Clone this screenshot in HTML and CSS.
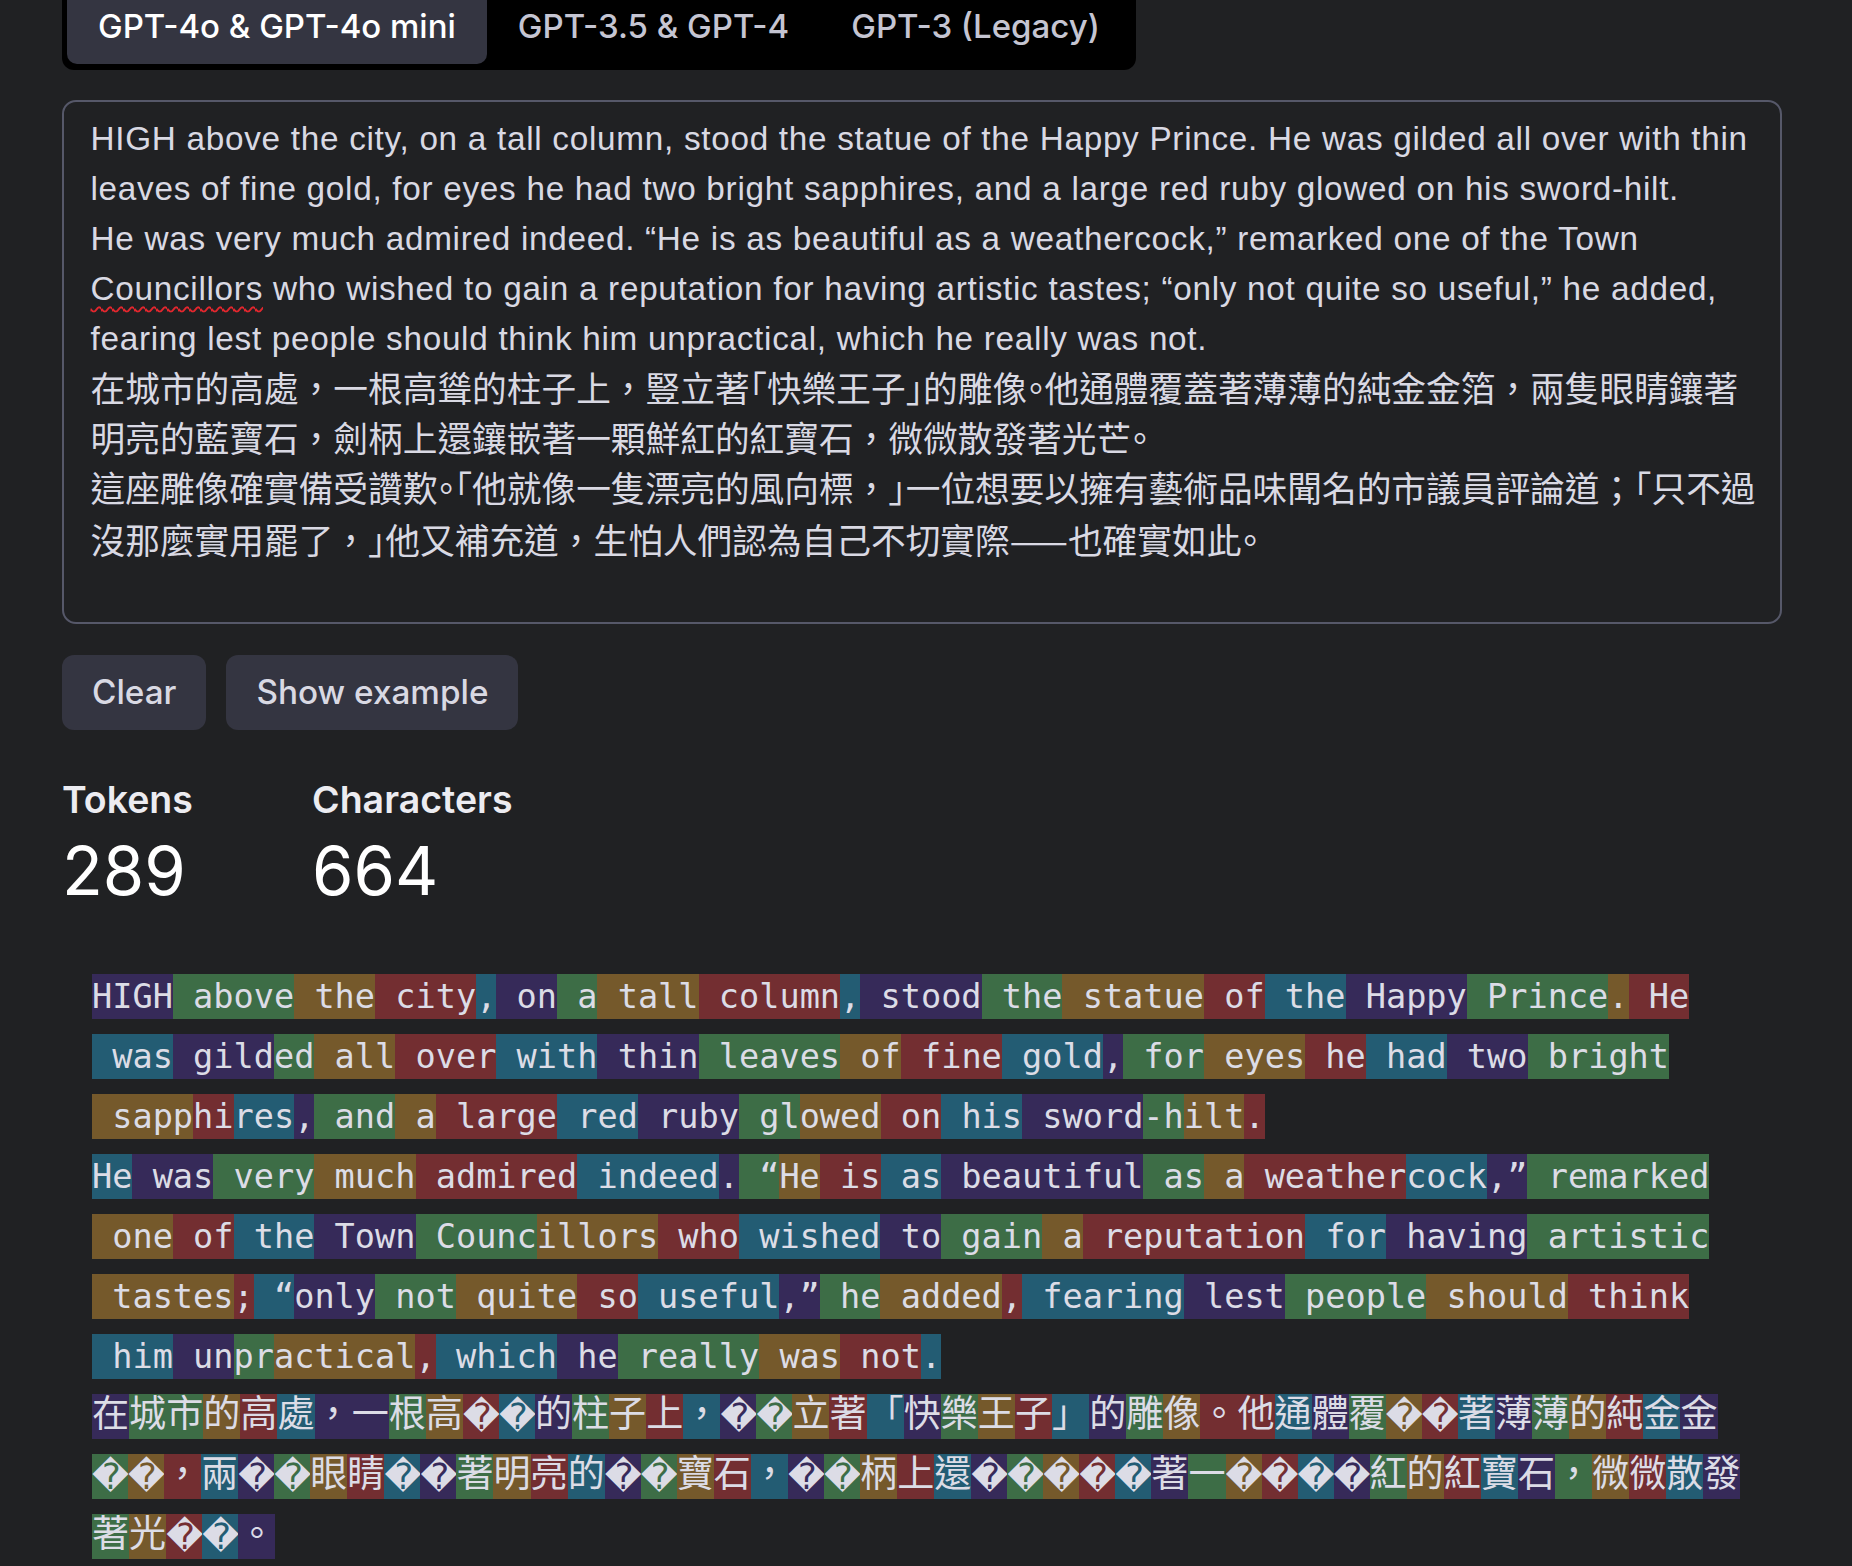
FILE: index.html
```html
<!DOCTYPE html>
<html lang="en">
<head>
<meta charset="utf-8">
<title>Tokenizer</title>
<link rel="stylesheet" href="styles.css">
</head>
<body>
<main class="page">
  <nav class="tabs">
    <div class="tab active">GPT-4o &amp; GPT-4o mini</div>
    <div class="tab">GPT-3.5 &amp; GPT-4</div>
    <div class="tab">GPT-3 (Legacy)</div>
  </nav>

  <div class="input">
    <div class="ln">HIGH above the city, on a tall column, stood the statue of the Happy Prince. He was gilded all over with thin</div>
    <div class="ln">leaves of fine gold, for eyes he had two bright sapphires, and a large red ruby glowed on his sword-hilt.</div>
    <div class="ln">He was very much admired indeed. “He is as beautiful as a weathercock,” remarked one of the Town</div>
    <div class="ln"><span class="typo">Councillors</span> who wished to gain a reputation for having artistic tastes; “only not quite so useful,” he added,</div>
    <div class="ln">fearing lest people should think him unpractical, which he really was not.</div>
    <div class="ln zh">在城市的高處，一根高聳的柱子上，豎立著<span class="h">「</span>快樂王子<span class="h">」</span>的雕像<span class="h">。</span>他通體覆蓋著薄薄的純金金箔，兩隻眼睛鑲著</div>
    <div class="ln zh">明亮的藍寶石，劍柄上還鑲嵌著一顆鮮紅的紅寶石，微微散發著光芒<span class="h">。</span></div>
    <div class="ln zh">這座雕像確實備受讚歎<span class="h">。「</span>他就像一隻漂亮的風向標，<span class="h">」</span>一位想要以擁有藝術品味聞名的市議員評論道；<span class="h">「</span>只不過</div>
    <div class="ln zh">沒那麼實用罷了，<span class="h">」</span>他又補充道，生怕人們認為自己不切實際<span class="dash">——</span>也確實如此<span class="h">。</span></div>
  </div>

  <div class="actions">
    <button class="btn">Clear</button>
    <button class="btn">Show example</button>
  </div>

  <div class="stats">
    <div class="stat">
      <div class="stat-label">Tokens</div>
      <div class="stat-value">289</div>
    </div>
    <div class="stat">
      <div class="stat-label">Characters</div>
      <div class="stat-value">664</div>
    </div>
  </div>

  <div class="tokens">
    <div class="para">
      <span class="k p">HIGH</span>
      <span class="k g"> above</span>
      <span class="k b"> the</span>
      <span class="k r"> city</span>
      <span class="k t">,</span>
      <span class="k p"> on</span>
      <span class="k g"> a</span>
      <span class="k b"> tall</span>
      <span class="k r"> column</span>
      <span class="k t">,</span>
      <span class="k p"> stood</span>
      <span class="k g"> the</span>
      <span class="k b"> statue</span>
      <span class="k r"> of</span>
      <span class="k t"> the</span>
      <span class="k p"> Happy</span>
      <span class="k g"> Prince</span>
      <span class="k b">.</span>
      <span class="k r"> He</span>
      <span class="k t"> was</span>
      <span class="k p"> gild</span>
      <span class="k g">ed</span>
      <span class="k b"> all</span>
      <span class="k r"> over</span>
      <span class="k t"> with</span>
      <span class="k p"> thin</span>
      <span class="k g"> leaves</span>
      <span class="k b"> of</span>
      <span class="k r"> fine</span>
      <span class="k t"> gold</span>
      <span class="k p">,</span>
      <span class="k g"> for</span>
      <span class="k b"> eyes</span>
      <span class="k r"> he</span>
      <span class="k t"> had</span>
      <span class="k p"> two</span>
      <span class="k g"> bright</span>
      <span class="k b"> sapp</span>
      <span class="k r">hi</span>
      <span class="k t">res</span>
      <span class="k p">,</span>
      <span class="k g"> and</span>
      <span class="k b"> a</span>
      <span class="k r"> large</span>
      <span class="k t"> red</span>
      <span class="k p"> ruby</span>
      <span class="k g"> gl</span>
      <span class="k b">owed</span>
      <span class="k r"> on</span>
      <span class="k t"> his</span>
      <span class="k p"> sword</span>
      <span class="k g">-h</span>
      <span class="k b">ilt</span>
      <span class="k r">.</span>
    </div>
    <div class="para">
      <span class="k t">He</span>
      <span class="k p"> was</span>
      <span class="k g"> very</span>
      <span class="k b"> much</span>
      <span class="k r"> admired</span>
      <span class="k t"> indeed</span>
      <span class="k p">.</span>
      <span class="k g"> “</span>
      <span class="k b">He</span>
      <span class="k r"> is</span>
      <span class="k t"> as</span>
      <span class="k p"> beautiful</span>
      <span class="k g"> as</span>
      <span class="k b"> a</span>
      <span class="k r"> weather</span>
      <span class="k t">cock</span>
      <span class="k p">,”</span>
      <span class="k g"> remarked</span>
      <span class="k b"> one</span>
      <span class="k r"> of</span>
      <span class="k t"> the</span>
      <span class="k p"> Town</span>
      <span class="k g"> Counc</span>
      <span class="k b">illors</span>
      <span class="k r"> who</span>
      <span class="k t"> wished</span>
      <span class="k p"> to</span>
      <span class="k g"> gain</span>
      <span class="k b"> a</span>
      <span class="k r"> reputation</span>
      <span class="k t"> for</span>
      <span class="k p"> having</span>
      <span class="k g"> artistic</span>
      <span class="k b"> tastes</span>
      <span class="k r">;</span>
      <span class="k t"> “</span>
      <span class="k p">only</span>
      <span class="k g"> not</span>
      <span class="k b"> quite</span>
      <span class="k r"> so</span>
      <span class="k t"> useful</span>
      <span class="k p">,”</span>
      <span class="k g"> he</span>
      <span class="k b"> added</span>
      <span class="k r">,</span>
      <span class="k t"> fearing</span>
      <span class="k p"> lest</span>
      <span class="k g"> people</span>
      <span class="k b"> should</span>
      <span class="k r"> think</span>
      <span class="k t"> him</span>
      <span class="k p"> un</span>
      <span class="k g">pr</span>
      <span class="k b">actical</span>
      <span class="k r">,</span>
      <span class="k t"> which</span>
      <span class="k p"> he</span>
      <span class="k g"> really</span>
      <span class="k b"> was</span>
      <span class="k r"> not</span>
      <span class="k t">.</span>
    </div>
    <div class="para">
      <span class="k p cj">在</span>
      <span class="k g cj">城市</span>
      <span class="k b cj">的</span>
      <span class="k r cj">高</span>
      <span class="k t cj">處</span>
      <span class="k p cj">，一</span>
      <span class="k g cj">根</span>
      <span class="k b cj">高</span>
      <span class="k r rc">�</span>
      <span class="k t rc">�</span>
      <span class="k p cj">的</span>
      <span class="k g cj">柱</span>
      <span class="k b cj">子</span>
      <span class="k r cj">上</span>
      <span class="k t cj">，</span>
      <span class="k p rc">�</span>
      <span class="k g rc">�</span>
      <span class="k b cj">立</span>
      <span class="k r cj">著</span>
      <span class="k t cj">「</span>
      <span class="k p cj">快</span>
      <span class="k g cj">樂</span>
      <span class="k b cj">王</span>
      <span class="k r cj">子</span>
      <span class="k t cj">」</span>
      <span class="k p cj">的</span>
      <span class="k g cj">雕</span>
      <span class="k b cj">像</span>
      <span class="k r cj">。他</span>
      <span class="k t cj">通</span>
      <span class="k p cj">體</span>
      <span class="k g cj">覆</span>
      <span class="k b rc">�</span>
      <span class="k r rc">�</span>
      <span class="k t cj">著</span>
      <span class="k p cj">薄</span>
      <span class="k g cj">薄</span>
      <span class="k b cj">的</span>
      <span class="k r cj">純</span>
      <span class="k t cj">金</span>
      <span class="k p cj">金</span>
      <span class="k g rc">�</span>
      <span class="k b rc">�</span>
      <span class="k r cj">，</span>
      <span class="k t cj">兩</span>
      <span class="k p rc">�</span>
      <span class="k g rc">�</span>
      <span class="k b cj">眼</span>
      <span class="k r cj">睛</span>
      <span class="k t rc">�</span>
      <span class="k p rc">�</span>
      <span class="k g cj">著</span>
      <span class="k b cj">明</span>
      <span class="k r cj">亮</span>
      <span class="k t cj">的</span>
      <span class="k p rc">�</span>
      <span class="k g rc">�</span>
      <span class="k b cj">寶</span>
      <span class="k r cj">石</span>
      <span class="k t cj">，</span>
      <span class="k p rc">�</span>
      <span class="k g rc">�</span>
      <span class="k b cj">柄</span>
      <span class="k r cj">上</span>
      <span class="k t cj">還</span>
      <span class="k p rc">�</span>
      <span class="k g rc">�</span>
      <span class="k b rc">�</span>
      <span class="k r rc">�</span>
      <span class="k t rc">�</span>
      <span class="k p cj">著</span>
      <span class="k g cj">一</span>
      <span class="k b rc">�</span>
      <span class="k r rc">�</span>
      <span class="k t rc">�</span>
      <span class="k p rc">�</span>
      <span class="k g cj">紅</span>
      <span class="k b cj">的</span>
      <span class="k r cj">紅</span>
      <span class="k t cj">寶</span>
      <span class="k p cj">石</span>
      <span class="k g cj">，</span>
      <span class="k b cj">微</span>
      <span class="k r cj">微</span>
      <span class="k t cj">散</span>
      <span class="k p cj">發</span>
      <span class="k g cj">著</span>
      <span class="k b cj">光</span>
      <span class="k r rc">�</span>
      <span class="k t rc">�</span>
      <span class="k p cj">。</span>
    </div>
  </div>
</main>
</body>
</html>
```

FILE: styles.css
```css
* {
  box-sizing: border-box;
}

html,
body {
  margin: 0;
  padding: 0;
  background: #202123;
}

body {
  font-family: "Liberation Sans", "Noto Sans CJK TC", sans-serif;
  color: #d9d9e3;
}

.page {
  margin-left: 62px;
  width: 1720px;
}

/* Tabs */
.tabs {
  display: inline-flex;
  background: #000;
  padding: 0 5px 6px;
  border-radius: 0 0 12px 12px;
}

.tab {
  font-family: Inter, "Liberation Sans", sans-serif;
  font-weight: 500;
  font-size: 33px;
  line-height: 52px;
  padding: 0 31px 12px;
  color: #c5c5d2;
  border-radius: 0 0 10px 10px;
  white-space: nowrap;
}

.tab.active {
  background: #343541;
  color: #fff;
}

/* Input */
.input {
  margin-top: 30px;
  height: 524px;
  border: 2px solid #565869;
  border-radius: 14px;
  padding: 11.5px 20px 0 26.5px;
  font-size: 33.3px;
  line-height: 50px;
  color: #d9d9e3;
  overflow: hidden;
}

.ln {
  white-space: nowrap;
  letter-spacing: 0.71px;
}

.ln.zh {
  font-family: Inter, "Noto Sans CJK TC", sans-serif;
  font-size: 34.7px;
  letter-spacing: 0;
}

.h {
  font-feature-settings: "halt" 1;
}

.dash {
  font-family: "Noto Sans CJK TC", sans-serif;
  letter-spacing: -8.7px;
  padding-right: 8.7px;
}

.typo {
  text-decoration: underline wavy #e3262d;
  text-decoration-thickness: 2px;
  text-underline-offset: 6px;
}

/* Buttons */
.actions {
  display: flex;
  gap: 20px;
  margin-top: 31px;
}

.btn {
  font-family: Inter, "Liberation Sans", sans-serif;
  font-weight: 500;
  font-size: 33.3px;
  line-height: 75px;
  height: 75px;
  padding: 0 30px;
  background: #343541;
  color: #d9d9e3;
  border: 0;
  border-radius: 12px;
}

/* Stats */
.stats {
  display: flex;
  margin-top: 47px;
}

.stat {
  width: 250px;
}

.stat-label {
  font-family: Inter, "Liberation Sans", sans-serif;
  font-weight: 600;
  font-size: 37.5px;
  line-height: 46px;
  color: #ececf1;
}

.stat-value {
  font-family: Inter, "Liberation Sans", sans-serif;
  font-weight: 400;
  font-size: 67px;
  line-height: 82px;
  margin-top: 7px;
  color: #fff;
}

/* Tokens */
.tokens {
  margin-top: 62px;
  margin-left: 30px;
  width: 1655px;
  display: flex;
  flex-direction: column;
  gap: 15px;
}

.para {
  display: flex;
  flex-wrap: wrap;
  row-gap: 15px;
}

.k {
  flex: none;
  height: 45px;
  line-height: 45px;
  white-space: pre;
  font-family: "DejaVu Sans Mono", "Liberation Mono", monospace;
  font-size: 33.6px;
  color: #dcdce6;
  text-spacing-trim: space-all;
}

.k.cj {
  font-family: "Noto Sans CJK TC", sans-serif;
  font-size: 37.1px;
  line-height: 35px;
}

.k.rc {
  width: 36px;
  text-align: center;
  font-family: "DejaVu Sans", sans-serif;
  font-size: 36px;
  line-height: 45px;
  overflow: hidden;
}

.p { background: #362a59; }
.g { background: #3d6d46; }
.b { background: #75592b; }
.r { background: #732e31; }
.t { background: #235c73; }
```
